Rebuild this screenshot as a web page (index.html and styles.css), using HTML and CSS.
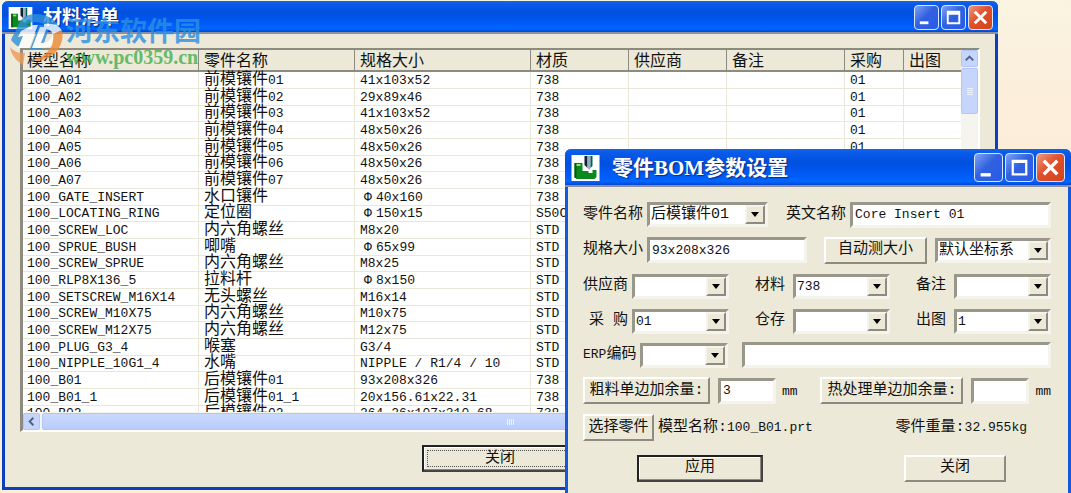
FILE: index.html
```html
<!DOCTYPE html>
<html lang="zh-CN">
<head>
<meta charset="utf-8">
<title>材料清单</title>
<link rel="stylesheet" href="styles.css">
</head>
<body>
<main class="desktop">
  <section class="window list-window">
    <header class="titlebar">
      <svg class="app-icon" viewBox="0 0 28 26" aria-hidden="true">
        <rect width="28" height="26" fill="#fff"/>
        <path d="M3 8h8v8h6v2h4v-3h5v9H3z" fill="#0a8a1e"/>
        <path d="M3 8h2v16H3z" fill="#045c10"/><path d="M5 9h4v2H5z" fill="#9be06a"/>
        <path d="M14 1h3v12l-3-3z" fill="#123"/><path d="M17 1h3v12l-1 2-2-2z" fill="#9ac"/><path d="M20 1h2v10l-2 2z" fill="#064"/>
      </svg>
      <h1>材料清单</h1>
      <div class="controls">
        <button class="ctl" aria-label="最小化"><svg viewBox="0 0 24 24"><path d="M5 16h9v3H5z" fill="#fff"/></svg></button>
        <button class="ctl" aria-label="最大化"><svg viewBox="0 0 24 24"><path d="M5 5h14v14H5zM7 9v8h10V9z" fill="#fff" fill-rule="evenodd"/></svg></button>
        <button class="ctl close" aria-label="关闭窗口"><svg viewBox="0 0 24 24"><path d="M6 6l12 12M18 6L6 18" stroke="#fff" stroke-width="3"/></svg></button>
      </div>
    </header>
    <div class="list-body">
      <div class="listview">
        <div class="viewport">
          <table class="parts">
            <colgroup><col class="c-model"><col class="c-name"><col class="c-size"><col class="c-mat"><col class="c-mat"><col class="c-note"><col class="c-buy"><col></colgroup>
            <thead><tr><th>模型名称</th><th>零件名称</th><th>规格大小</th><th>材质</th><th>供应商</th><th>备注</th><th>采购</th><th>出图</th></tr></thead>
            <tbody>
              <tr><td>100_A01</td><td><b>前模镶件</b>01</td><td>41x103x52</td><td>738</td><td></td><td></td><td>01</td><td></td></tr>
              <tr><td>100_A02</td><td><b>前模镶件</b>02</td><td>29x89x46</td><td>738</td><td></td><td></td><td>01</td><td></td></tr>
              <tr><td>100_A03</td><td><b>前模镶件</b>03</td><td>41x103x52</td><td>738</td><td></td><td></td><td>01</td><td></td></tr>
              <tr><td>100_A04</td><td><b>前模镶件</b>04</td><td>48x50x26</td><td>738</td><td></td><td></td><td>01</td><td></td></tr>
              <tr><td>100_A05</td><td><b>前模镶件</b>05</td><td>48x50x26</td><td>738</td><td></td><td></td><td>01</td><td></td></tr>
              <tr><td>100_A06</td><td><b>前模镶件</b>06</td><td>48x50x26</td><td>738</td><td></td><td></td><td></td><td></td></tr>
              <tr><td>100_A07</td><td><b>前模镶件</b>07</td><td>48x50x26</td><td>738</td><td></td><td></td><td></td><td></td></tr>
              <tr><td>100_GATE_INSERT</td><td><b>水口镶件</b></td><td><i>Φ</i>40x160</td><td>738</td><td></td><td></td><td></td><td></td></tr>
              <tr><td>100_LOCATING_RING</td><td><b>定位圈</b></td><td><i>Φ</i>150x15</td><td>S50C</td><td></td><td></td><td></td><td></td></tr>
              <tr><td>100_SCREW_LOC</td><td><b>内六角螺丝</b></td><td>M8x20</td><td>STD</td><td></td><td></td><td></td><td></td></tr>
              <tr><td>100_SPRUE_BUSH</td><td><b>唧嘴</b></td><td><i>Φ</i>65x99</td><td>STD</td><td></td><td></td><td></td><td></td></tr>
              <tr><td>100_SCREW_SPRUE</td><td><b>内六角螺丝</b></td><td>M8x25</td><td>STD</td><td></td><td></td><td></td><td></td></tr>
              <tr><td>100_RLP8X136_5</td><td><b>拉料杆</b></td><td><i>Φ</i>8x150</td><td>STD</td><td></td><td></td><td></td><td></td></tr>
              <tr><td>100_SETSCREW_M16X14</td><td><b>无头螺丝</b></td><td>M16x14</td><td>STD</td><td></td><td></td><td></td><td></td></tr>
              <tr><td>100_SCREW_M10X75</td><td><b>内六角螺丝</b></td><td>M10x75</td><td>STD</td><td></td><td></td><td></td><td></td></tr>
              <tr><td>100_SCREW_M12X75</td><td><b>内六角螺丝</b></td><td>M12x75</td><td>STD</td><td></td><td></td><td></td><td></td></tr>
              <tr><td>100_PLUG_G3_4</td><td><b>喉塞</b></td><td>G3/4</td><td>STD</td><td></td><td></td><td></td><td></td></tr>
              <tr><td>100_NIPPLE_10G1_4</td><td><b>水嘴</b></td><td>NIPPLE / R1/4 / 10</td><td>STD</td><td></td><td></td><td></td><td></td></tr>
              <tr><td>100_B01</td><td><b>后模镶件</b>01</td><td>93x208x326</td><td>738</td><td></td><td></td><td></td><td></td></tr>
              <tr><td>100_B01_1</td><td><b>后模镶件</b>01_1</td><td>20x156.61x22.31</td><td>738</td><td></td><td></td><td></td><td></td></tr>
              <tr><td>100_B02</td><td><b>后模镶件</b>02</td><td>264.26x107x310.68</td><td>738</td><td></td><td></td><td></td><td></td></tr>
            </tbody>
          </table>
        </div>
        <div class="vscroll">
          <button class="sbtn" aria-label="向上滚动"><svg viewBox="0 0 16 16"><path d="M4 10l4-4 4 4" fill="none" stroke="#4d6185" stroke-width="2"/></svg></button>
          <div class="thumb"><svg viewBox="0 0 8 8"><path d="M1 1.5h6M1 3.5h6M1 5.5h6M1 7.5h6" stroke="#eef4fe"/></svg></div>
        </div>
        <div class="hscroll">
          <button class="sbtn" aria-label="向左滚动"><svg viewBox="0 0 16 16"><path d="M10 4L6 8l4 4" fill="none" stroke="#4d6185" stroke-width="2"/></svg></button>
          <div class="thumb"><svg viewBox="0 0 8 8"><path d="M1.5 1v6M3.5 1v6M5.5 1v6M7.5 1v6" stroke="#eef4fe"/></svg></div>
        </div>
      </div>
      <button class="btn default focused">关闭</button>
    </div>
  </section>

  <div class="watermark">
    <svg class="mark" viewBox="0 0 56 54" aria-hidden="true">
      <path d="M8 29C6 13 14 2 28 2c11 0 20 6 22 12l-8 3c-2-4-8-7-15-7-9 0-13 7-13 19z" fill="#2f8fd8"/>
      <path d="M3 28C8 14 18 11 24 14L15 36c-5-1-9-4-12-8z" fill="#2f8fd8"/>
      <path d="M10 36l5-12-5 1 3-6 12-6h5l-9 23z" fill="#fff"/>
      <path d="M22 37l9-24h11l-8 24z" fill="#2f8fd8"/>
      <path d="M36 12c17-2 22 8 15 17-6 7-16 7-27 7l8-21h7l-6 16c12 0 17-14 3-14z" fill="#fff"/>
      <path d="M54 18c3 15-7 28-24 31l-8-1c15-2 25-12 23-26z" fill="#ee8a35"/>
      <path d="M2 35c4 5 9 6 15 6l-2 12C7 48 3 42 2 35z" fill="#ee9a55"/>
    </svg>
    <div class="mark-text"><span class="mark-cn">河东软件园</span><span class="mark-url">www.pc0359.cn</span></div>
  </div>

  <section class="window dialog">
    <header class="titlebar">
      <svg class="app-icon" viewBox="0 0 28 26" aria-hidden="true">
        <rect width="28" height="26" fill="#fff"/>
        <path d="M3 8h8v8h6v2h4v-3h4v7l-2 2H5l-2-2z" fill="#0a8a1e"/>
        <path d="M3 8h2v15H3z" fill="#045c10"/><path d="M5 9h4v2H5z" fill="#9be06a"/>
        <path d="M13 1h3v12l-3-3z" fill="#123"/><path d="M16 1h3v12l-1 2-2-2z" fill="#9ac"/><path d="M19 1h2v10l-2 2z" fill="#064"/>
      </svg>
      <h2>零件BOM参数设置</h2>
      <div class="controls">
        <button class="ctl" aria-label="最小化"><svg viewBox="0 0 24 24"><path d="M5 17h9v3H5z" fill="#fff"/></svg></button>
        <button class="ctl" aria-label="最大化"><svg viewBox="0 0 24 24"><path d="M5 5h14v14H5zM7 8v9h10V8z" fill="#fff" fill-rule="evenodd"/></svg></button>
        <button class="ctl close" aria-label="关闭窗口"><svg viewBox="0 0 24 24"><path d="M6 6l12 12M18 6L6 18" stroke="#fff" stroke-width="3"/></svg></button>
      </div>
    </header>
    <form class="form">
      <div class="row">
        <label for="part">零件名称</label>
        <span class="combo w-part cn"><select id="part"><option>后模镶件01</option></select><span class="arrow"></span></span>
        <label class="gap-l" for="en">英文名称</label>
        <input class="text grow" id="en" value="Core Insert 01">
      </div>
      <div class="row">
        <label for="size">规格大小</label>
        <input class="text w-size" id="size" value="93x208x326">
        <button type="button" class="btn push">自动测大小</button>
        <span class="combo w-csys cn"><select id="csys" aria-label="坐标系"><option>默认坐标系</option></select><span class="arrow"></span></span>
      </div>
      <div class="row three">
        <div class="field"><label for="vendor">供应商</label><span class="combo"><select id="vendor"><option></option></select><span class="arrow"></span></span></div>
        <div class="field"><label for="mat">材料</label><span class="combo"><select id="mat"><option>738</option></select><span class="arrow"></span></span></div>
        <div class="field"><label for="note">备注</label><span class="combo"><select id="note"><option></option></select><span class="arrow"></span></span></div>
      </div>
      <div class="row three">
        <div class="field"><label for="buy">采 购</label><span class="combo"><select id="buy"><option>01</option></select><span class="arrow"></span></span></div>
        <div class="field"><label for="stock">仓存</label><span class="combo"><select id="stock"><option></option></select><span class="arrow"></span></span></div>
        <div class="field"><label for="draw">出图</label><span class="combo"><select id="draw"><option>1</option></select><span class="arrow"></span></span></div>
      </div>
      <div class="row">
        <label for="erp"><span class="en">ERP</span>编码</label>
        <span class="combo w-erp"><select id="erp"><option></option></select><span class="arrow"></span></span>
        <input class="text grow wide-gap" id="erptext" aria-label="ERP编码内容">
      </div>
      <div class="row tall">
        <button type="button" class="btn w-rough">粗料单边加余量:</button>
        <input class="text w-num" id="rough" aria-label="粗料单边加余量" value="3">
        <span class="unit">mm</span>
        <button type="button" class="btn push w-heat">热处理单边加余量:</button>
        <input class="text w-num" id="heat" aria-label="热处理单边加余量">
        <span class="unit">mm</span>
      </div>
      <div class="row tall">
        <button type="button" class="btn w-pick">选择零件</button>
        <span>模型名称:<span class="en">100_B01.prt</span></span>
        <span class="weight">零件重量:<span class="en">32.955kg</span></span>
      </div>
      <div class="row actions">
        <button type="button" class="btn default">应用</button>
        <button type="button" class="btn">关闭</button>
      </div>
    </form>
  </section>
</main>
</body>
</html>
```
FILE: styles.css
```css
* { box-sizing: border-box; }

body {
  margin: 0;
  overflow: hidden;
  background: #fbeed6;
  color: #111;
  font: 15px/16px "Liberation Mono", "Noto Sans CJK SC", monospace;
}

button, input, select { font: inherit; color: inherit; margin: 0; }

.desktop {
  position: relative;
  height: 100vh;
  padding: 1px 73px 3px 2px;
  background: linear-gradient(#f9f4e0, #fbeedb 20%, #fbebd2 60%, #fdeed6);
}

.window {
  display: flex;
  flex-direction: column;
  background: #ece9d8;
  border: solid #0a4fdc;
  border-width: 0 3px 3px;
  border-radius: 6px 6px 0 0;
}

.list-window { height: 100%; border-color: #0a3fc4; }

.titlebar {
  display: flex;
  align-items: center;
  height: 33px;
  margin: 0 -3px;
  padding: 2px 5px 0 6px;
  gap: 10px;
  border-bottom: 2px solid #8b8fa0;
  border-radius: 6px 6px 0 0;
  background: linear-gradient(#1565e8 0, #0a5bea 10%, #0050e0 40%, #005cf8 75%, #0066ff 90%, #0046d0 100%);
}

.titlebar h1, .titlebar h2 {
  flex: 1;
  margin: 0;
  color: #fff;
  font: bold 19px/24px "Liberation Serif", "Noto Sans CJK SC", serif;
  text-shadow: 1px 1px 1px #0a2a80;
}

.app-icon { width: 25px; height: 22px; }
.controls { display: flex; gap: 2px; }

.ctl {
  width: 25px;
  height: 25px;
  padding: 0;
  border: 1px solid #dbe6fb;
  border-radius: 4px;
  background: linear-gradient(135deg, #7ea3f5, #3161e0 45%, #2a5ae8);
}

.ctl svg { display: block; width: 100%; height: 100%; }
.ctl.close { background: linear-gradient(135deg, #ee9a80, #e0502c 45%, #d24418); }

.list-body {
  flex: 1;
  min-height: 0;
  display: flex;
  flex-direction: column;
  align-items: center;
  gap: 13px;
  padding: 14px 15px 15px;
}

.list-body .btn { width: 156px; height: 27px; }

.listview {
  flex: 1;
  min-height: 0;
  align-self: stretch;
  display: grid;
  grid-template: minmax(0, 1fr) 18px / minmax(0, 1fr) 17px;
  background: #fff;
  border: 2px solid;
  border-color: #8d8b80 #fff #fff #8d8b80;
  border-left-width: 3px;
}

.viewport { overflow: hidden; }

.parts {
  width: 100%;
  border-collapse: separate;
  border-spacing: 0;
  table-layout: fixed;
  font-size: 13px;
}

.c-model { width: 176px; }
.c-name { width: 156px; }
.c-size { width: 176px; }
.c-mat { width: 98px; }
.c-note { width: 118px; }
.c-buy { width: 59px; }

.parts th {
  height: 22px;
  padding: 3px 0 0 5px;
  background: #ece9d8;
  border: solid #8d8b80;
  border-width: 0 1px 2px 0;
  font-size: 16px;
  font-weight: normal;
  line-height: 16px;
  text-align: left;
}

.parts td {
  height: 17px;
  padding: 1px 0 0 5px;
  border: solid #e9e7d8;
  border-width: 0 1px 1px 0;
  line-height: 14px;
  white-space: nowrap;
}

.parts tr > :first-child { padding-left: 4px; }
.parts tr > :last-child { border-right: 0; }
.parts tbody tr:nth-child(3n) td { height: 16px; }
.parts b { font-weight: normal; font-size: 16px; line-height: 1px; }
.parts i { display: inline-block; width: 16px; font-style: normal; text-align: center; }

.sbtn, .thumb {
  display: grid;
  place-items: center;
  padding: 0;
  border: 1px solid #b2c6f5;
  border-radius: 2px;
  background: #c6d5fb;
}

.sbtn { width: 17px; height: 17px; }
.sbtn svg { width: 15px; height: 15px; }
.thumb svg { width: 8px; height: 8px; }
.vscroll { display: flex; flex-direction: column; gap: 1px; background: #f5f4ef; }
.vscroll .thumb { height: 46px; }
.hscroll { display: flex; gap: 2px; grid-column: 1 / -1; padding-top: 1px; background: #f5f4ef; }
.hscroll .thumb { flex: 1; background: linear-gradient(#cad8fd, #b9cdfb); }

.btn {
  height: 27px;
  padding: 0;
  background: #ece9d8;
  border: 2px solid;
  border-color: #fff #8d8b80 #8d8b80 #fff;
  white-space: nowrap;
}

.btn.default { border-color: #222 #444 #444 #222; box-shadow: inset -1px -1px #8d8b80, inset 1px 1px #fff; }
.btn.focused { outline: 1px dotted #555; outline-offset: -6px; }

.watermark { position: absolute; left: 8px; top: 12px; display: flex; gap: 2px; opacity: .8; pointer-events: none; }
.mark { width: 56px; height: 54px; }
.mark-text { display: flex; flex-direction: column; padding-top: 3px; }
.mark-cn { color: #2c8fe2; font: bold 27px/30px "Noto Sans CJK SC", sans-serif; }
.mark-url { color: #43b04e; font: bold 20px/24px "Liberation Serif", serif; }

.dialog { position: absolute; right: 0; top: 149px; width: 506px; height: 360px; border-color: #1458dc; }

.dialog .titlebar { height: 38px; padding: 1px 6px 0; gap: 12px; }
.dialog h2 { font-size: 21px; line-height: 28px; }
.dialog .app-icon { width: 29px; height: 26px; }
.dialog .ctl { width: 29px; height: 29px; }

.form { display: flex; flex-direction: column; padding: 10px 17px 0 15px; }
.row { display: flex; align-items: center; height: 35px; gap: 4px; }
.row:nth-child(n+2) { height: 36px; }
.row:nth-child(n+4) { height: 34px; }
.row.tall:nth-child(n) { height: 37px; }

.en, .text, .combo { font-size: 13px; }
.combo.cn { font-size: 15px; }
.grow { flex: 1; min-width: 0; }
.gap-l { margin-left: 14px; }

.text {
  height: 26px;
  padding: 0 2px;
  background: #fff;
  border: 3px solid;
  border-color: #99968a #f5f4ec #f5f4ec #99968a;
  border-radius: 0;
}

.combo {
  display: grid;
  width: 97px;
  height: 25px;
  background: #fff;
  border: 3px solid;
  border-color: #99968a #f5f4ec #f5f4ec #99968a;
}

.combo select {
  grid-area: 1 / 1;
  min-width: 0;
  appearance: none;
  padding: 0 20px 0 1px;
  border: 0;
  border-radius: 0;
  background: none;
  line-height: 19px;
}

.arrow {
  grid-area: 1 / 1;
  justify-self: end;
  display: grid;
  place-items: center;
  width: 20px;
  background: #ece9d8;
  border: 2px solid;
  border-color: #f5f4ec #8d8b80 #8d8b80 #f5f4ec;
  pointer-events: none;
}

.arrow::after {
  content: "";
  border: solid transparent;
  border-width: 5px 4px 0;
  border-top-color: #000;
}

.w-part { width: 121px; }
.w-size { width: 160px; }
.w-csys { width: 116px; }
.w-erp { width: 88px; }
.w-rough { width: 127px; }
.w-heat { width: 143px; }
.w-pick { width: 71px; }
.w-num { width: 58px; margin-left: 4px; }
.wide-gap { margin-left: 10px; }
.push { margin-left: auto; }
.row > .push:not(.w-heat) { width: 103px; margin-right: 4px; }
.unit { font-size: 13px; padding: 2px 0 0 2px; }
.weight { margin: 0 24px 0 auto; }

.three { justify-content: space-between; }
.field { display: flex; align-items: center; gap: 4px; }
.field:not(:first-child) { gap: 8px; }
.field:first-child { width: 146px; justify-content: flex-end; }

.row.actions { height: 46px; justify-content: space-between; padding: 0 45px 2px 54px; }
.actions .btn { width: 102px; }
.actions .btn.default { width: 126px; }
```
